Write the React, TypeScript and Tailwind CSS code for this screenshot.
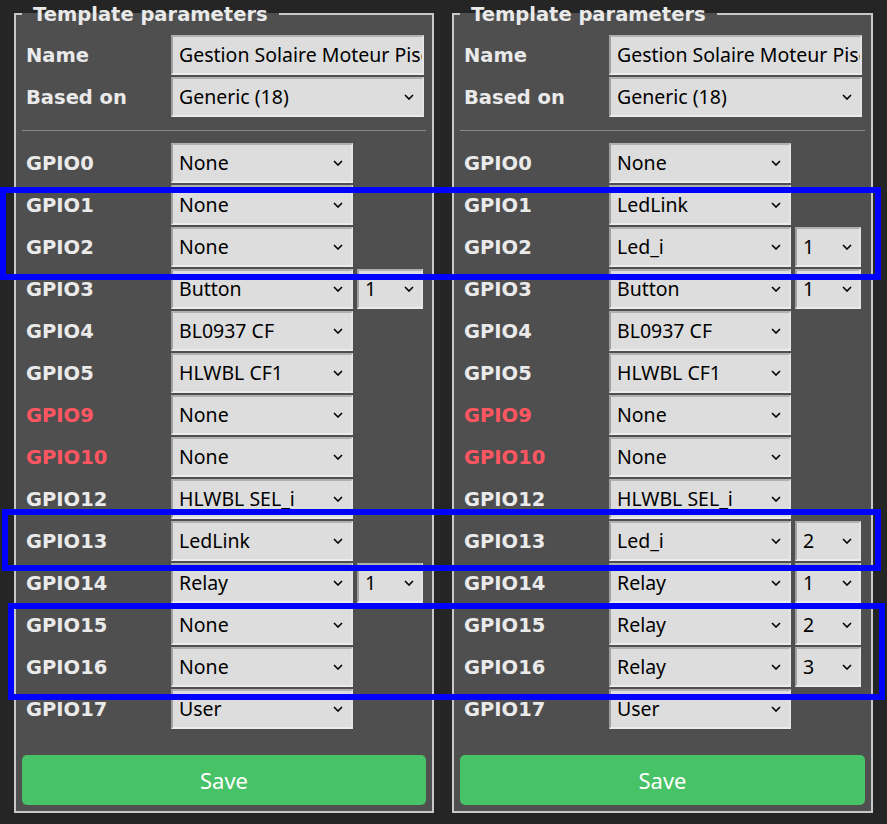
import React from "react";

type Row = { pin: string; val: string; idx?: string; warn?: boolean };

const leftRows: Row[] = [
  { pin: "GPIO0", val: "None" },
  { pin: "GPIO1", val: "None" },
  { pin: "GPIO2", val: "None" },
  { pin: "GPIO3", val: "Button", idx: "1" },
  { pin: "GPIO4", val: "BL0937 CF" },
  { pin: "GPIO5", val: "HLWBL CF1" },
  { pin: "GPIO9", val: "None", warn: true },
  { pin: "GPIO10", val: "None", warn: true },
  { pin: "GPIO12", val: "HLWBL SEL_i" },
  { pin: "GPIO13", val: "LedLink" },
  { pin: "GPIO14", val: "Relay", idx: "1" },
  { pin: "GPIO15", val: "None" },
  { pin: "GPIO16", val: "None" },
  { pin: "GPIO17", val: "User" },
];

const rightRows: Row[] = [
  { pin: "GPIO0", val: "None" },
  { pin: "GPIO1", val: "LedLink" },
  { pin: "GPIO2", val: "Led_i", idx: "1" },
  { pin: "GPIO3", val: "Button", idx: "1" },
  { pin: "GPIO4", val: "BL0937 CF" },
  { pin: "GPIO5", val: "HLWBL CF1" },
  { pin: "GPIO9", val: "None", warn: true },
  { pin: "GPIO10", val: "None", warn: true },
  { pin: "GPIO12", val: "HLWBL SEL_i" },
  { pin: "GPIO13", val: "Led_i", idx: "2" },
  { pin: "GPIO14", val: "Relay", idx: "1" },
  { pin: "GPIO15", val: "Relay", idx: "2" },
  { pin: "GPIO16", val: "Relay", idx: "3" },
  { pin: "GPIO17", val: "User" },
];

const inFont = { fontFamily: '"Noto Sans", "Open Sans", sans-serif' };
const lblFont = { fontFamily: '"DejaVu Sans", Verdana, sans-serif' };

function Chevron() {
  return (
    <svg width="10" height="6" viewBox="0 0 10 6" className="shrink-0">
      <path d="M1 1 L5 5 L9 1" fill="none" stroke="#000" strokeWidth="1.6" />
    </svg>
  );
}

function Sel({ text, w, chev = true, pr = "pr-[8px]" }: { text: string; w: string; chev?: boolean; pr?: string }) {
  return (
    <div
      className={`${w} h-[40px] shrink-0 flex items-center bg-[#dddddd] border-2 border-t-[#b0b0b0] border-l-[#a0a0a0] border-b-[#ececec] border-r-[#e4e4e4] pl-[6px] ${pr} text-black text-[19.5px] overflow-hidden`}
      style={inFont}
    >
      <span className="flex-1 min-w-0 whitespace-nowrap overflow-hidden leading-[28px]">{text}</span>
      {chev && <Chevron />}
    </div>
  );
}

function Label({ text, warn }: { text: string; warn?: boolean }) {
  return (
    <div
      className={`w-[149px] shrink-0 pl-[4px] pt-[2px] font-bold text-[19.5px] leading-[26px] ${warn ? "text-[#ff5661]" : "text-[#eaeaea]"}`}
      style={lblFont}
    >
      {text}
    </div>
  );
}

function Panel({ rows, w, lpad }: { rows: Row[]; w: string; lpad: string }) {
  return (
    <fieldset className={`${w} border-2 border-[#c8c8c8] bg-[#4f4f4f] px-[6px] pb-[6px] pt-[7px] min-w-0`}>
      <legend
        className={`${lpad} pr-[11px] pt-[1px] font-bold text-[19.5px] leading-[27px] text-[#eaeaea]`}
        style={lblFont}
      >
        Template parameters
      </legend>
      <div className="flex flex-col gap-[2px]">
        <div className="flex items-center">
          <Label text="Name" />
          <Sel text="Gestion Solaire Moteur Piscine" w="w-[253px]" chev={false} pr="pr-0" />
        </div>
        <div className="flex items-center">
          <Label text="Based on" />
          <Sel text="Generic (18)" w="w-[253px]" />
        </div>
      </div>
      <div className="h-px bg-[#8a8a8a] mt-[13px] mb-[12px]" />
      <div className="flex flex-col gap-[2px]">
        {rows.map((r) => (
          <div key={r.pin} className="flex items-center">
            <Label text={r.pin} warn={r.warn} />
            <Sel text={r.val} w="w-[182px]" />
            {r.idx && (
              <div className="ml-[4px]">
                <Sel text={r.idx} w="w-[66px]" pr="pr-[7px]" />
              </div>
            )}
          </div>
        ))}
      </div>
      <button
        className="mt-[26px] w-full h-[50px] rounded-[5px] bg-[#47c266] text-white text-[22px] leading-none"
        style={inFont}
      >
        Save
      </button>
    </fieldset>
  );
}

export default function App() {
  return (
    <div className="relative w-[887px] h-[824px] bg-[#252525] overflow-hidden">
      <div className="flex gap-[18px] pl-[14px]">
        <Panel rows={leftRows} w="w-[420px]" lpad="pl-[11px]" />
        <Panel rows={rightRows} w="w-[421px]" lpad="pl-[11px]" />
      </div>
      <div className="absolute left-[0px] top-[187px] w-[881px] h-[93px] border-[6px] border-[#0000ff]" />
      <div className="absolute left-[2px] top-[509px] w-[879px] h-[62px] border-[6px] border-[#0000ff]" />
      <div className="absolute left-[8px] top-[603px] w-[877px] h-[97px] border-[6px] border-[#0000ff]" />
    </div>
  );
}
